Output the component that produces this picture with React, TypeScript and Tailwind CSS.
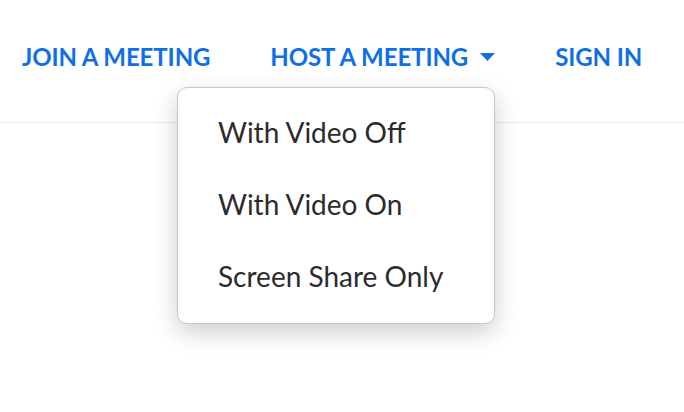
import React from "react";

export default function App() {
  return (
    <div className="relative w-[684px] h-[412px] bg-white overflow-hidden" style={{ fontFamily: "Lato, 'Open Sans', sans-serif" }}>
      <header className="h-[123px] border-b border-[#ececec] flex items-start pt-[40px] pl-[22px]">
        <nav className="flex items-center gap-[60px] text-[#0e6fe6] font-bold text-[24px] leading-[34px]">
          <a className="block tracking-[-0.1px]">JOIN A MEETING</a>
          <a className="flex items-center gap-[12px] tracking-[-0.1px]">
            HOST A MEETING
            <svg width="15" height="8" viewBox="0 0 15 8"><path d="M0 0 L15 0 L7.5 8 Z" fill="#0e6fe6" /></svg>
          </a>
          <a className="block tracking-[-0.1px]">SIGN IN</a>
        </nav>
      </header>
      <div className="absolute left-[177px] top-[87px] w-[318px] h-[237px] bg-white rounded-[10px] border border-[#c6c6c6] shadow-[0_8px_24px_rgba(0,0,0,0.2)] flex flex-col pt-[8px] pl-[40px] text-[#2b2b30] text-[28px] leading-[72px]">
        <div>With Video Off</div>
        <div>With Video On</div>
        <div>Screen Share Only</div>
      </div>
    </div>
  );
}
